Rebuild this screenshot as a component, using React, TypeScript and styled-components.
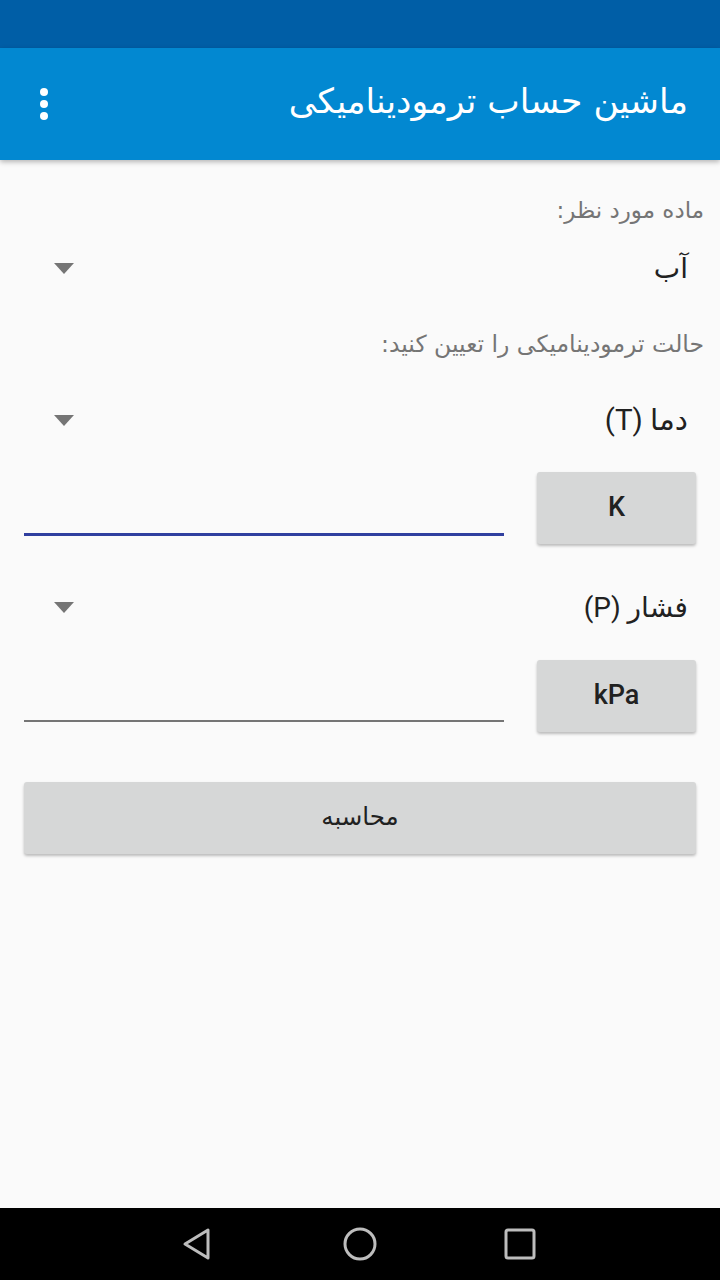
import React from "react";
import styled, { createGlobalStyle } from "styled-components";

const Global = createGlobalStyle`
  html, body { margin: 0; padding: 0; background: #fafafa; }
  body { font-family: Roboto, "DejaVu Sans", sans-serif; }
  * { box-sizing: border-box; }
`;

const Screen = styled.div`
  width: 720px;
  height: 1280px;
  display: flex;
  flex-direction: column;
  background: #fafafa;
  overflow: hidden;
`;

const StatusBar = styled.div`
  height: 48px;
  background: #005ea6;
  flex-shrink: 0;
`;

const AppBar = styled.header`
  height: 112px;
  background: #0288d1;
  display: flex;
  direction: rtl;
  align-items: center;
  justify-content: space-between;
  padding: 0 32px 0 24px;
  box-shadow: 0 2px 5px rgba(0, 0, 0, 0.28);
  position: relative;
  z-index: 1;
  flex-shrink: 0;
`;

const Title = styled.h1`
  margin: 0;
  font-family: "DejaVu Sans", sans-serif;
  font-weight: normal;
  font-size: 34.5px;
  color: #ffffff;
  padding-bottom: 6px;
`;

const MenuButton = styled.div`
  width: 40px;
  display: flex;
  justify-content: center;
`;

const Content = styled.main`
  flex: 1;
  direction: rtl;
  padding: 0 16px 0 24px;
  display: flex;
  flex-direction: column;
`;

const Label = styled.div<{ $top: number }>`
  margin-top: ${(p) => p.$top}px;
  height: 32px;
  line-height: 32px;
  font-family: "DejaVu Sans", sans-serif;
  font-size: ${(p) => (p.$top > 35 ? 23.5 : 23)}px;
  color: #757575;
`;

const Spinner = styled.div<{ $top: number }>`
  margin-top: ${(p) => p.$top}px;
  height: 48px;
  display: flex;
  align-items: center;
  justify-content: space-between;
  padding: 0 16px 0 30px;
`;

const SpinnerText = styled.span<{ $size?: number }>`
  font-family: Roboto, "DejaVu Sans", sans-serif;
  font-size: ${(p) => p.$size ?? 28}px;
  color: #212121;
`;

const Arrow = styled.span`
  width: 0;
  height: 0;
  border-left: 10px solid transparent;
  border-right: 10px solid transparent;
  border-top: 11px solid #757575;
`;

const InputRow = styled.div<{ $top: number }>`
  margin-top: ${(p) => p.$top}px;
  display: flex;
  align-items: flex-start;
  gap: 33px;
  padding-right: 8px;
`;

const UnitButton = styled.button`
  width: 159px;
  height: 72px;
  border: none;
  border-radius: 3px;
  background: #d6d7d7;
  box-shadow: 0 2px 3px rgba(0, 0, 0, 0.25);
  font-family: Roboto, sans-serif;
  font-weight: 500;
  font-size: 27px;
  color: #212121;
  display: flex;
  align-items: center;
  justify-content: center;
  flex-shrink: 0;
  padding: 0 0 2px;
`;

const Field = styled.div<{ $focused?: boolean }>`
  width: 480px;
  height: ${(p) => (p.$focused ? 64 : 62)}px;
  border-bottom: ${(p) => (p.$focused ? "3px solid #303f9f" : "2px solid #757575")};
`;

const CalcButton = styled.button`
  margin-top: 50px;
  margin-right: 8px;
  width: 672px;
  height: 72px;
  border: none;
  border-radius: 3px;
  background: #d6d7d7;
  box-shadow: 0 2px 3px rgba(0, 0, 0, 0.25);
  font-family: "DejaVu Sans", sans-serif;
  font-size: 24.5px;
  color: #212121;
  padding-bottom: 4px;
`;

const NavBar = styled.nav`
  height: 72px;
  background: #000000;
  display: flex;
  align-items: center;
  justify-content: center;
  gap: 116px;
  flex-shrink: 0;
`;

const NavIcon = styled.svg`
  width: 44px;
  height: 44px;
`;

export default function App() {
  return (
    <Screen>
      <Global />
      <StatusBar />
      <AppBar>
        <Title>ماشین حساب ترمودینامیکی</Title>
        <MenuButton>
          <svg width="10" height="34" viewBox="0 0 10 34">
            <circle cx="5" cy="5" r="4" fill="#fff" />
            <circle cx="5" cy="17" r="4" fill="#fff" />
            <circle cx="5" cy="29" r="4" fill="#fff" />
          </svg>
        </MenuButton>
      </AppBar>
      <Content>
        <Label $top={34}>ماده مورد نظر:</Label>
        <Spinner $top={18}>
          <SpinnerText>آب</SpinnerText>
          <Arrow />
        </Spinner>
        <Label $top={36}>حالت ترمودینامیکی را تعیین کنید:</Label>
        <Spinner $top={36}>
          <SpinnerText $size={29.5}>دما (T)</SpinnerText>
          <Arrow />
        </Spinner>
        <InputRow $top={28}>
          <UnitButton>K</UnitButton>
          <Field $focused />
        </InputRow>
        <Spinner $top={39}>
          <SpinnerText>فشار (P)</SpinnerText>
          <Arrow />
        </Spinner>
        <InputRow $top={29}>
          <UnitButton>kPa</UnitButton>
          <Field />
        </InputRow>
        <CalcButton>محاسبه</CalcButton>
      </Content>
      <NavBar>
        <NavIcon viewBox="0 0 44 44">
          <path d="M30 8 L30 36 L7 22 Z" fill="none" stroke="#bdbdbd" strokeWidth="3" strokeLinejoin="round" />
        </NavIcon>
        <NavIcon viewBox="0 0 44 44">
          <circle cx="22" cy="22" r="15" fill="none" stroke="#bdbdbd" strokeWidth="3" />
        </NavIcon>
        <NavIcon viewBox="0 0 44 44">
          <rect x="8" y="8" width="28" height="28" rx="2" fill="none" stroke="#bdbdbd" strokeWidth="3" />
        </NavIcon>
      </NavBar>
    </Screen>
  );
}
